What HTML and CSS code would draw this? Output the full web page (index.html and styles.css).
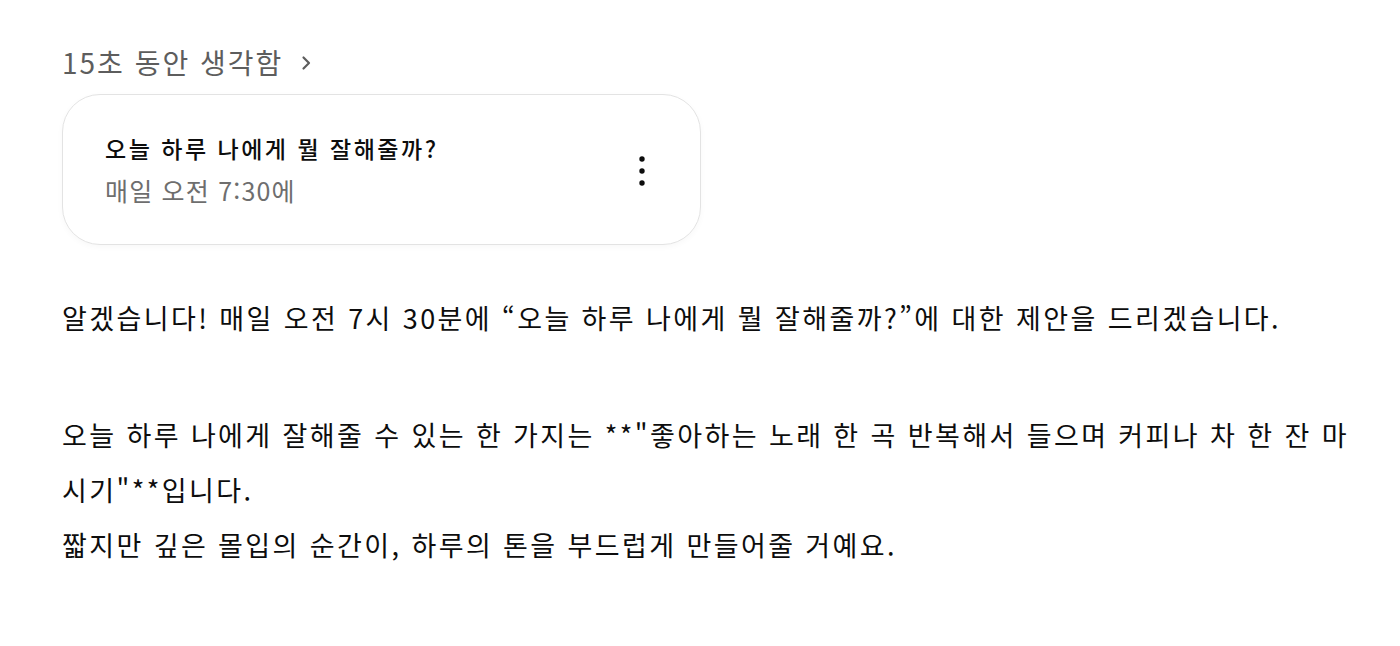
FILE: index.html
```html
<!DOCTYPE html>
<html lang="ko">
<head>
<meta charset="utf-8">
<link rel="stylesheet" href="styles.css">
</head>
<body>
<main class="thread">
  <button class="thought">
    <span class="thought-label">15초 동안 생각함</span>
    <svg class="chevron" width="14" height="18" viewBox="0 0 14 18" aria-hidden="true"><path d="M4.5 3.5 L10 9 L4.5 14.5" fill="none" stroke="#5d5d5d" stroke-width="2.2" stroke-linecap="round" stroke-linejoin="round"/></svg>
  </button>
  <div class="task-card">
    <div class="task-text">
      <div class="task-title">오늘 하루 나에게 뭘 잘해줄까?</div>
      <div class="task-time">매일 오전 7:30에</div>
    </div>
    <svg class="kebab" width="12" height="32" viewBox="0 0 12 32" aria-hidden="true">
      <circle cx="6" cy="4" r="2.7" fill="#0d0d0d"/>
      <circle cx="6" cy="16" r="2.7" fill="#0d0d0d"/>
      <circle cx="6" cy="28" r="2.7" fill="#0d0d0d"/>
    </svg>
  </div>
  <div class="answer">
    <p>알겠습니다! 매일 오전 7시 30분에 “오늘 하루 나에게 뭘 잘해줄까?”에 대한 제안을 드리겠습니다.</p>
    <p>오늘 하루 나에게 잘해줄 수 있는 한 가지는 **"좋아하는 노래 한 곡 반복해서 들으며 커피나 차 한 잔 마시기"**입니다.<br>짧지만 깊은 몰입의 순간이, 하루의 톤을 부드럽게 만들어줄 거예요.</p>
  </div>
</main>
</body>
</html>
```
FILE: styles.css
```css
html, body {
  margin: 0;
  padding: 0;
  background: #ffffff;
}
body {
  font-family: "Noto Sans CJK KR", "Noto Sans", sans-serif;
  color: #0d0d0d;
}
.thread {
  padding: 43px 0 0 62px;
  width: 1292px;
}
.thought {
  display: flex;
  align-items: center;
  gap: 16px;
  border: 0;
  background: none;
  padding: 0;
  margin: 0;
  font: inherit;
  color: #5d5d5d;
  cursor: pointer;
}
.thought-label {
  font-size: 28px;
  line-height: 38px;
  letter-spacing: 2px;
}
.chevron {
  display: block;
  margin-top: 1px;
}
.task-card {
  margin-top: 13px;
  width: 639px;
  height: 151px;
  box-sizing: border-box;
  border: 1.5px solid #e3e3e3;
  border-radius: 38px;
  box-shadow: 0 2px 6px rgba(0, 0, 0, 0.03);
  display: flex;
  align-items: center;
  justify-content: space-between;
  padding: 0 52px 0 42px;
}
.task-text {
  display: flex;
  flex-direction: column;
  gap: 10px;
}
.task-title {
  font-size: 23px;
  line-height: 30px;
  font-weight: 500;
  letter-spacing: 2.5px;
  color: #0d0d0d;
}
.task-time {
  font-size: 25px;
  line-height: 34px;
  letter-spacing: 1.2px;
  color: #6e6e6e;
}
.kebab {
  display: block;
  margin-top: 2px;
}
.answer {
  margin-top: 45px;
  font-size: 27px;
  line-height: 55px;
  letter-spacing: 2.4px;
}
.answer p {
  margin: 0 0 62px 0;
}
```
